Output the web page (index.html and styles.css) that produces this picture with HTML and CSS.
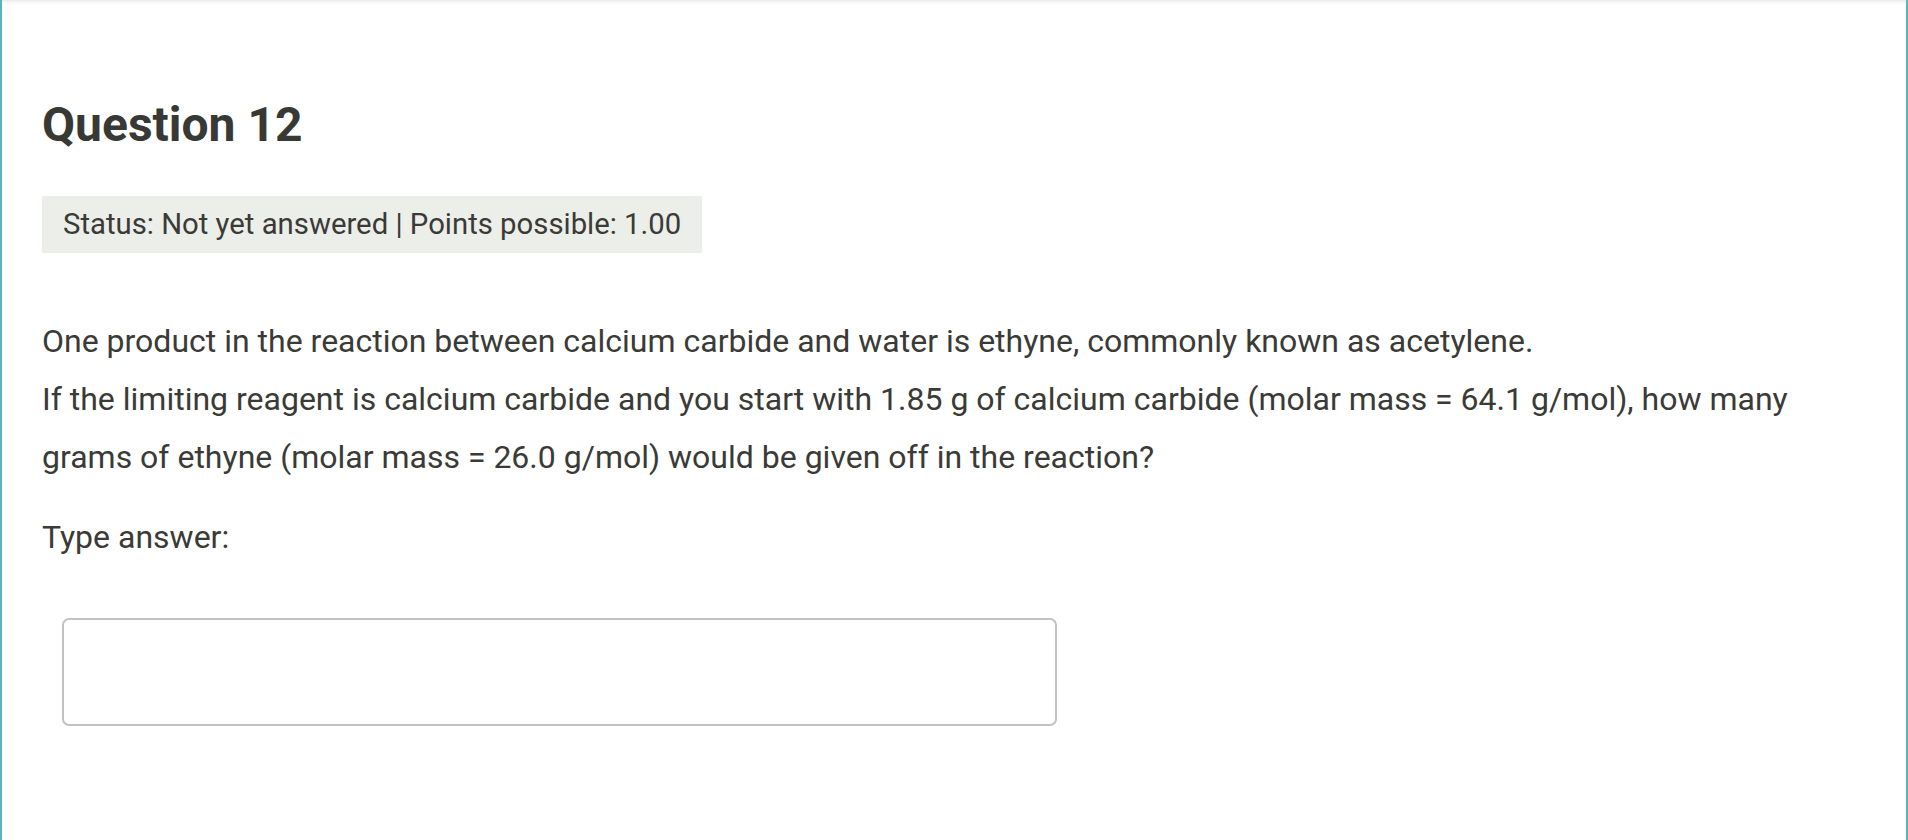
FILE: index.html
```html
<!DOCTYPE html>
<html lang="en">
<head>
<meta charset="utf-8">
<title>Question 12</title>
<link rel="stylesheet" href="styles.css">
</head>
<body>
<div class="frame">
  <div class="question">
    <h2 class="q-title">Question 12</h2>
    <div class="q-status">Status: Not yet answered | Points possible: 1.00</div>
    <div class="q-text">
      <p>One product in the reaction between calcium carbide and water is ethyne, commonly known as acetylene.</p>
      <p>If the limiting reagent is calcium carbide and you start with 1.85 g of calcium carbide (molar mass = 64.1 g/mol), how many grams of ethyne (molar mass = 26.0 g/mol) would be given off in the reaction?</p>
    </div>
    <div class="q-label">Type answer:</div>
    <div class="q-answer"><input class="answer-input" type="text" aria-label="Type answer"></div>
  </div>
</div>
</body>
</html>
```

FILE: styles.css
```css
html, body {
  margin: 0;
  padding: 0;
  background: #ffffff;
}
body {
  font-family: Roboto, "Liberation Sans", Arial, sans-serif;
  color: #3a3a37;
}
.frame {
  box-sizing: border-box;
  min-height: 840px;
  border-left: 2px solid #56b4c1;
  border-right: 2px solid #56b4c1;
  background: linear-gradient(to bottom, #e9e9e9 0px, #f6f6f6 2px, #ffffff 5px);
}
.question {
  padding: 94px 40px 0 40px;
}
.q-title {
  margin: 0;
  font-size: 48px;
  line-height: 61px;
  font-weight: 700;
  color: #383835;
}
.q-status {
  display: inline-block;
  margin-top: 41px;
  background: #eceee9;
  font-size: 29.3px;
  line-height: 29px;
  padding: 14px 21px 14px 21px;
  color: #3a3a37;
}
.q-text {
  margin-top: 59px;
  font-size: 32px;
  line-height: 58px;
}
.q-text p {
  margin: 0;
}
.q-label {
  margin-top: 22px;
  font-size: 32px;
  line-height: 58px;
}
.q-answer {
  margin-top: 52px;
  padding-left: 20px;
}
.answer-input {
  display: block;
  box-sizing: border-box;
  width: 995px;
  height: 108px;
  margin: 0;
  border: 2px solid #c2c2c2;
  border-radius: 7px;
  background: #ffffff;
  font-family: Roboto, "Liberation Sans", Arial, sans-serif;
  font-size: 29px;
  padding: 0 16px;
  outline: none;
}
```
